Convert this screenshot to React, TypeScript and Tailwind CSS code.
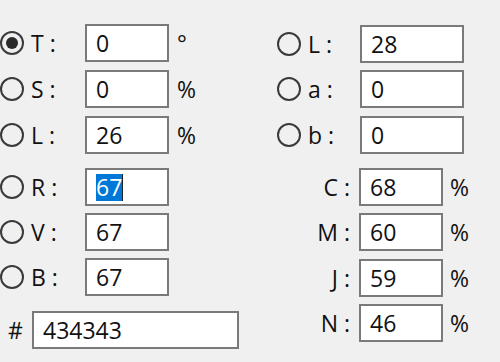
import React from 'react';

function Radio({ checked = false }: { checked?: boolean }) {
  return (
    <span className="flex h-[24px] w-[24px] shrink-0 items-center justify-center rounded-full border-2 border-[#3a3a3a]">
      {checked && <span className="h-[12px] w-[12px] rounded-full bg-[#2a2a2a]" />}
    </span>
  );
}

function Field({ value, width, selected = false }: { value: string; width: string; selected?: boolean }) {
  return (
    <div className={`flex h-[38px] shrink-0 items-center border-2 border-[#7a7a7a] bg-white pl-[9px] ${width}`}>
      {selected ? (
        <span className="border-r border-[#222] bg-[#0078d7] leading-[27px] text-white">{value}</span>
      ) : (
        <span>{value}</span>
      )}
    </div>
  );
}

function LeftRow({ label, value, unit, checked, selected, className }: {
  label: string;
  value: string;
  unit?: string;
  checked?: boolean;
  selected?: boolean;
  className?: string;
}) {
  return (
    <div className={`flex h-[38px] items-center ${className ?? ''}`}>
      <Radio checked={checked} />
      <span className="w-[61px] pl-[7px]">{label}</span>
      <Field value={value} width="w-[84px]" selected={selected} />
      {unit && <span className="ml-[8px]">{unit}</span>}
    </div>
  );
}

function LabRow({ label, value, className }: { label: string; value: string; className?: string }) {
  return (
    <div className={`flex h-[38px] items-center ${className ?? ''}`}>
      <Radio />
      <span className="w-[59px] pl-[7px]">{label}</span>
      <Field value={value} width="w-[104px]" />
    </div>
  );
}

function CmykRow({ label, value, className }: { label: string; value: string; className?: string }) {
  return (
    <div className={`flex h-[38px] items-center ${className ?? ''}`}>
      <span className="w-[82px] pr-[9px] text-right">{label}</span>
      <Field value={value} width="w-[84px]" />
      <span className="ml-[7px]">%</span>
    </div>
  );
}

export default function App() {
  return (
    <div className="flex h-[362px] w-[500px] overflow-hidden bg-[#f0f0f0] font-['Open_Sans',sans-serif] text-[23px] text-[#111]">
      <div className="flex w-[277px] flex-col pt-[24px]">
        <LeftRow label="T :" value="0" unit="°" checked />
        <LeftRow label="S :" value="0" unit="%" className="mt-[8px]" />
        <LeftRow label="L :" value="26" unit="%" className="mt-[8px]" />
        <LeftRow label="R :" value="67" selected className="mt-[14px]" />
        <LeftRow label="V :" value="67" className="mt-[7px]" />
        <LeftRow label="B :" value="67" className="mt-[7px]" />
        <div className="mt-[15px] flex h-[38px] items-center">
          <span className="w-[32px] pl-[8px]">#</span>
          <Field value="434343" width="w-[207px]" />
        </div>
      </div>
      <div className="flex flex-col pt-[25px]">
        <LabRow label="L :" value="28" />
        <LabRow label="a :" value="0" className="mt-[7px]" />
        <LabRow label="b :" value="0" className="mt-[8px]" />
        <CmykRow label="C :" value="68" className="mt-[14px]" />
        <CmykRow label="M :" value="60" className="mt-[7px]" />
        <CmykRow label="J :" value="59" className="mt-[8px]" />
        <CmykRow label="N :" value="46" className="mt-[7px]" />
      </div>
    </div>
  );
}
